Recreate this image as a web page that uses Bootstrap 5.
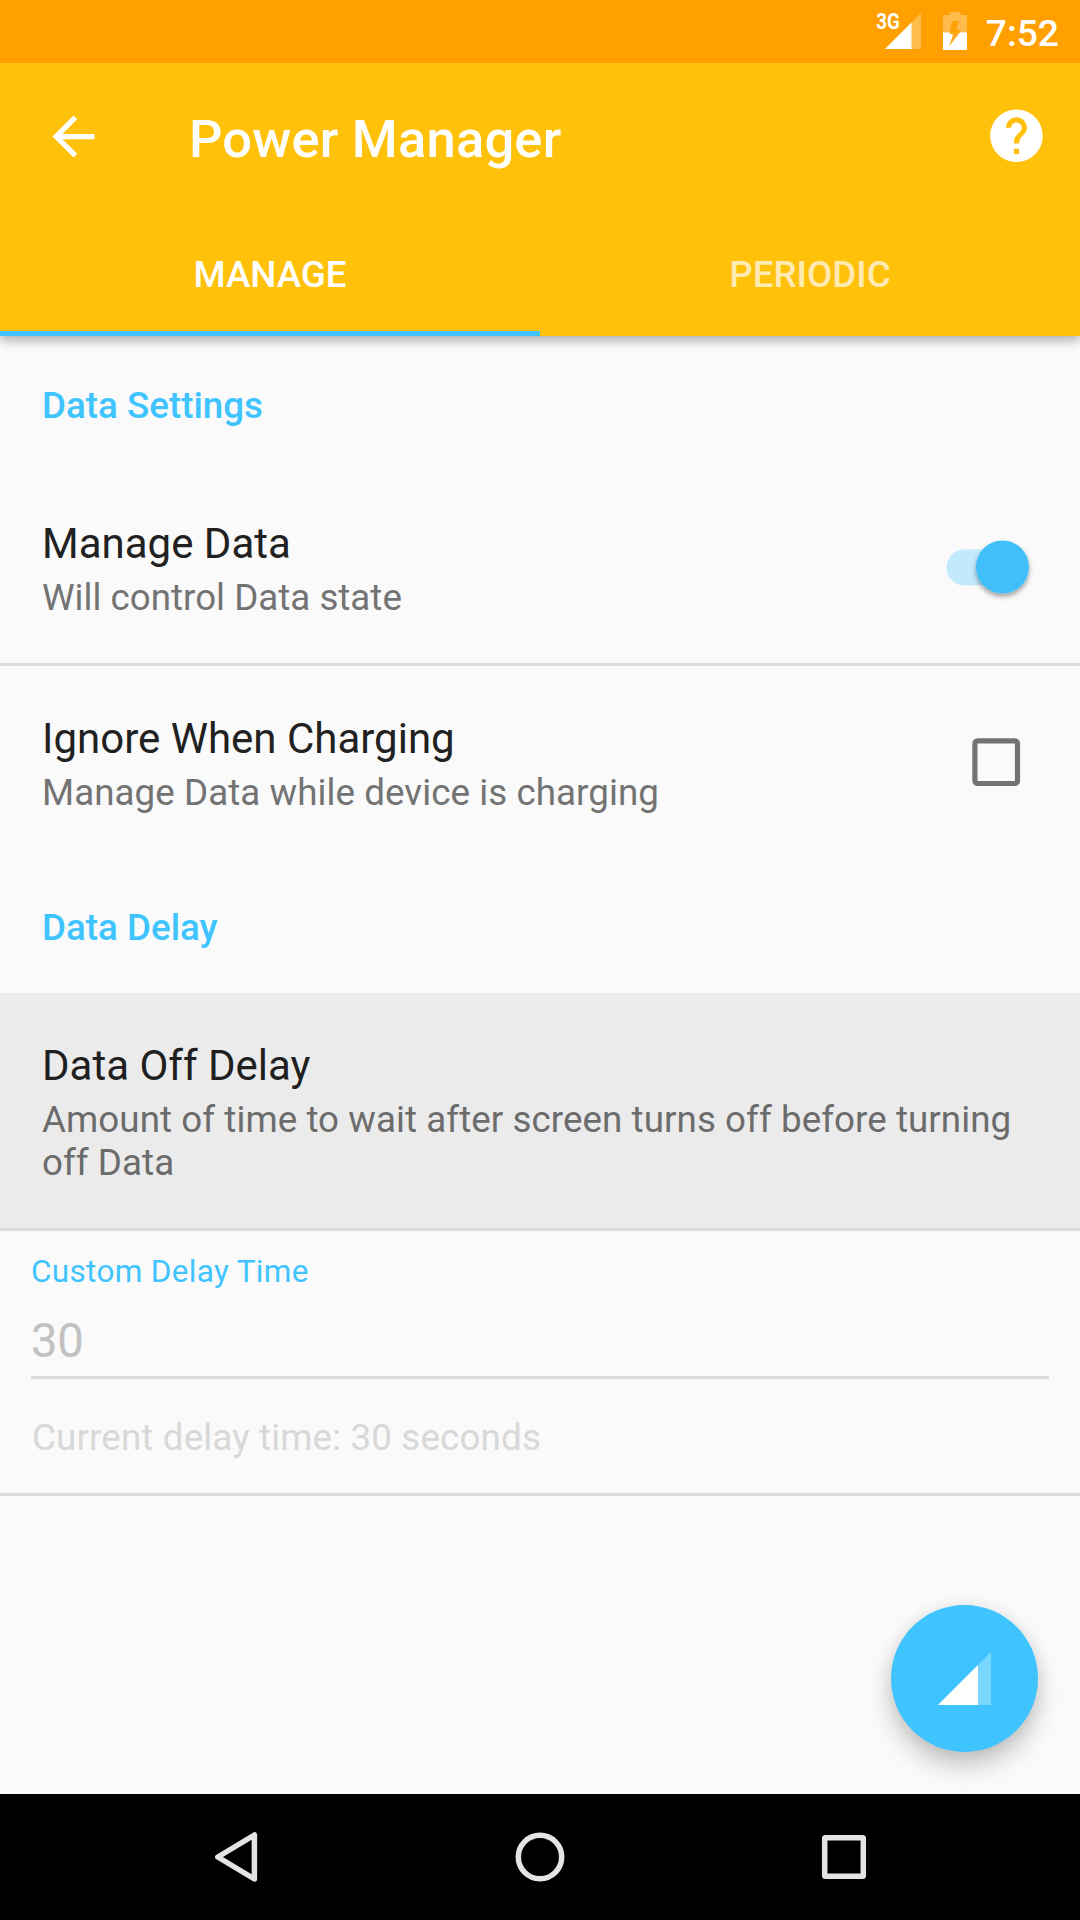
<!DOCTYPE html>
<html lang="en">
<head>
<meta charset="utf-8">
<meta name="viewport" content="width=device-width, initial-scale=1">
<title>Power Manager</title>
<link href="https://cdn.jsdelivr.net/npm/bootstrap@5.3.0/dist/css/bootstrap.min.css" rel="stylesheet">
<style>
:root { --accent: #40c4ff; }
body { font-family: Roboto, "Noto Sans", sans-serif; background: #fafafa; color: #212121; }
svg { display: block; flex: none; }
.screen { width: 1080px; height: 1920px; }
.w-medium { font-weight: 500; }
.status-bar { height: 63px; background: #ffa000; padding-right: 21px; }
.clock { font-size: 37.2px; line-height: 43px; padding-top: 3px; margin-left: 18px; }
.app-bar { background: #ffc10a; box-shadow: 0 4px 11px rgba(0,0,0,.33); clip-path: inset(0 0 -30px 0); z-index: 1; }
.tool-row { height: 147px; padding: 0 32px 0 42px; }
.app-title { font-size: 52.5px; line-height: 62px; letter-spacing: .2px; margin: 4px 0 0 84px; }
.tab-strip .nav-link { font-size: 36.75px; line-height: 43px; color: rgba(255,255,255,.7); padding: 43px 0 0; height: 126px; border-bottom: 5px solid transparent; border-radius: 0; }
.tab-strip .nav-link.active { color: #fff; border-bottom-color: var(--accent); }
.group-title { height: 135px; padding: 48px 42px 0; font-size: 36.75px; line-height: 43px; color: var(--accent); }
.pref { padding: 48px 42px 44px; }
.pref-name { font-size: 42px; line-height: 49px; margin-bottom: 8px; }
.pref-note { font-size: 36.75px; line-height: 43px; color: #737373; }
.pref-note.loose { letter-spacing: .06px; }
.pref.pressed { background: #ebebeb; }
.pressed .pref-name { color: #1f1f1f; }
.pressed .pref-note { color: #6c6c6c; }
.widget { margin-bottom: 4px; }
.rule { height: 3px; background: #dcdcdc; }
.delay-form { height: 262px; padding: 22px 31px 0; }
.delay-label { font-size: 31.5px; line-height: 37px; letter-spacing: .32px; color: var(--accent); }
.delay-input { font-size: 47.25px; line-height: 55px; color: #c1c1c1; height: 89px; padding-top: 24px; border-bottom: 3px solid #dadada; letter-spacing: -.4px; }
.delay-now { font-size: 36.75px; line-height: 43px; letter-spacing: .14px; color: #d8d8d8; margin: 37px 0 0 1px; }
.fab { right: 42px; bottom: 42px; width: 147px; height: 147px; background: var(--accent); box-shadow: 0 14px 24px rgba(0,0,0,.21), 0 1px 16px rgba(0,0,0,.07); }
.system-nav { height: 126px; }
</style>
</head>
<body>
<div class="screen d-flex flex-column overflow-hidden">
  <div class="status-bar d-flex align-items-center justify-content-end text-white">
    <svg width="96" height="63" viewBox="872 0 96 63" fill="#fff">
      <text x="876.300" y="29.300" font-size="21.500" font-weight="700" textLength="23.500" lengthAdjust="spacingAndGlyphs">3G</text>
      <path d="M885 49L921 13V49z" opacity=".3"/><path d="M885 49L911.500 22.500V49z"/>
      <path opacity=".3" d="M943 15h6.500v-2.700h11V15H967v17.300H943z"/>
      <path d="M943 32.300h24V50H943z"/>
      <path fill="#ffa000" opacity=".9" d="M951.700 21H959.200L956.300 29.600L961.300 30.600L949.300 46.300L953 34.600L949.500 33.800z"/>
    </svg>
    <div class="clock w-medium">7:52</div>
  </div>
  <header class="app-bar position-relative text-white">
    <div class="tool-row d-flex align-items-center">
      <svg width="63" height="63" viewBox="0 0 24 24" fill="#fff"><path d="M20 11H7.830l5.590-5.590L12 4l-8 8 8 8 1.410-1.410L7.830 13H20z"/></svg>
      <h1 class="app-title w-medium">Power Manager</h1>
      <svg class="ms-auto" width="63" height="63" viewBox="0 0 24 24" fill="#fff"><path transform="translate(0 -.3)" d="M12 2C6.480 2 2 6.480 2 12s4.480 10 10 10 10-4.480 10-10S17.520 2 12 2zm1 17h-2v-2h2v2zm2.070-7.750l-.9.920C13.450 12.900 13 13.500 13 15h-2v-.5c0-1.100.450-2.100 1.170-2.830l1.240-1.260c.370-.360.590-.860.590-1.410 0-1.100-.9-2-2-2s-2 .9-2 2H8c0-2.210 1.790-4 4-4s4 1.790 4 4c0 .880-.360 1.680-.930 2.250z"/></svg>
    </div>
    <nav class="nav nav-justified tab-strip">
      <a class="nav-link active w-medium">MANAGE</a>
      <a class="nav-link w-medium">PERIODIC</a>
    </nav>
  </header>
  <main class="flex-grow-1 position-relative">
    <h2 class="group-title w-medium mb-0">Data Settings</h2>
    <div class="pref d-flex justify-content-between align-items-center">
      <div><div class="pref-name">Manage Data</div><div class="pref-note">Will control Data state</div></div>
      <svg class="widget" width="94" height="72" viewBox="944 530.500 94 72" overflow="visible">
        <defs><filter id="thumbShadow" x="-30%" y="-30%" width="160%" height="160%"><feDropShadow dx="0" dy="3" stdDeviation="2.500" flood-opacity=".38"/></filter></defs>
        <rect x="946.500" y="549" width="75" height="36" rx="18" fill="#c3e9fd"/>
        <circle cx="1002.500" cy="566.500" r="26.500" fill="#40bffb" filter="url(#thumbShadow)"/>
      </svg>
    </div>
    <div class="rule"></div>
    <div class="pref d-flex justify-content-between align-items-center">
      <div><div class="pref-name">Ignore When Charging</div><div class="pref-note loose">Manage Data while device is charging</div></div>
      <svg class="widget" width="84" height="84" viewBox="954 720 84 84"><rect x="974.900" y="740.900" width="42.600" height="42.600" rx="2.600" fill="none" stroke="#737373" stroke-width="5.200"/></svg>
    </div>
    <h2 class="group-title w-medium mb-0">Data Delay</h2>
    <div class="pref pressed">
      <div class="pref-name">Data Off Delay</div>
      <div class="pref-note loose">Amount of time to wait after screen turns off before turning off Data</div>
    </div>
    <div class="rule"></div>
    <div class="delay-form">
      <div class="delay-label">Custom Delay Time</div>
      <div class="delay-input">30</div>
      <div class="delay-now">Current delay time: 30 seconds</div>
    </div>
    <div class="rule"></div>
    <button class="fab btn rounded-circle border-0 p-0 position-absolute" aria-label="Toggle data">
      <svg width="147" height="147" viewBox="891 1605 147 147" fill="#fff"><path d="M938 1705L991 1652V1705z" opacity=".3"/><path d="M938 1705L978 1665V1705z"/></svg>
    </button>
  </main>
  <footer class="system-nav bg-black">
    <svg width="1080" height="126" viewBox="0 1794 1080 126" fill="none" stroke="#e4e4e4" stroke-width="5.500" stroke-linejoin="round">
      <path d="M217.800 1857L254.400 1835V1879z"/>
      <circle cx="540" cy="1857" r="21.700"/>
      <rect x="824.700" y="1837.700" width="38.600" height="38.600" rx=".8"/>
    </svg>
  </footer>
</div>
<script src="https://cdn.jsdelivr.net/npm/bootstrap@5.3.0/dist/js/bootstrap.bundle.min.js"></script>
</body>
</html>
